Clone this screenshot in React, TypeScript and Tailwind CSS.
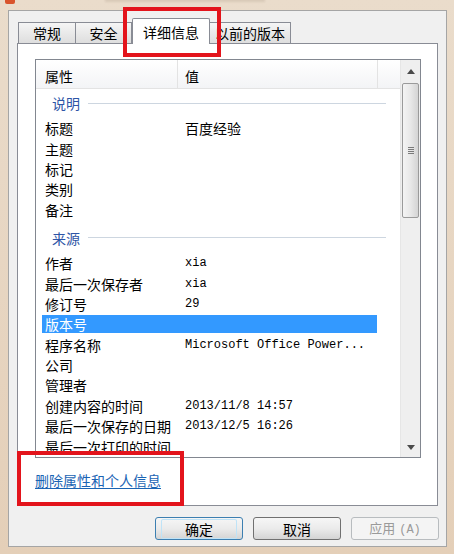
import React from "react";

const cjk = { fontFamily: '"Noto Sans CJK SC", "Noto Sans", sans-serif' };
const mono = {
  fontFamily: '"Liberation Mono", "Noto Sans CJK SC", monospace',
};

// 说明 group
const descRows: [string, string][] = [
  ["标题", "百度经验"],
  ["主题", ""],
  ["标记", ""],
  ["类别", ""],
  ["备注", ""],
];

// 来源 group
const originRows: [string, string][] = [
  ["作者", "xia"],
  ["最后一次保存者", "xia"],
  ["修订号", "29"],
  ["版本号", ""],
  ["程序名称", "Microsoft Office Power..."],
  ["公司", ""],
  ["管理者", ""],
  ["创建内容的时间", "2013/11/8 14:57"],
  ["最后一次保存的日期", "2013/12/5 16:26"],
  ["最后一次打印的时间", ""],
];

function GroupHeader({ label, first }: { label: string; first?: boolean }) {
  return (
    <div
      className={`flex items-center h-[20px] box-content pb-[5px] pl-[16px] pr-[14px] ${
        first ? "pt-[4px]" : "pt-[8px]"
      }`}
    >
      <span className="text-[14px] leading-[20px] text-[#2d55a6]">{label}</span>
      <div className="flex-1 ml-[8px] h-px bg-[#cdd6e0]" />
    </div>
  );
}

function PropRow({
  name,
  value,
  selected,
}: {
  name: string;
  value: string;
  selected?: boolean;
}) {
  return (
    <div className="flex items-center h-[20.4px] pl-[6px]">
      <div
        className={`flex items-center w-[335px] h-[18px] ${
          selected ? "bg-[#3399ff] text-white" : "text-black"
        }`}
      >
        <span className="w-[135px] pl-[3px] text-[14px] leading-[18px] whitespace-nowrap overflow-visible">
          {name}
        </span>
        <span
          className="pl-[8px] text-[12px] leading-[18px] whitespace-nowrap"
          style={value && /[\u4e00-\u9fff]/.test(value) ? { ...cjk, fontSize: 14 } : mono}
        >
          {value}
        </span>
      </div>
    </div>
  );
}

function Arrow({ up }: { up?: boolean }) {
  return (
    <svg width="8" height="5" viewBox="0 0 8 5">
      <path d={up ? "M0 5 L4 0 L8 5 Z" : "M0 0 L8 0 L4 5 Z"} fill="#4a4a4a" />
    </svg>
  );
}

function Scrollbar() {
  return (
    <div className="w-[20px] flex flex-col bg-[#efefef] border-l border-[#e6e6e6]">
      <div className="h-[23px] flex items-center justify-center">
        <Arrow up />
      </div>
      <div className="h-[135px] mx-[1px] rounded-[2px] border border-[#9a9a9a] bg-gradient-to-r from-[#f4f4f4] via-[#e8e8e8] to-[#d4d4d4] flex items-center justify-center">
        <div className="flex flex-col gap-[1px]">
          <div className="w-[6px] h-px bg-[#7a7a7a]" />
          <div className="w-[6px] h-px bg-[#7a7a7a]" />
          <div className="w-[6px] h-px bg-[#7a7a7a]" />
          <div className="w-[6px] h-px bg-[#7a7a7a]" />
        </div>
      </div>
      <div className="flex-1" />
      <div className="h-[20px] flex items-center justify-center">
        <Arrow />
      </div>
    </div>
  );
}

function Tab({
  label,
  width,
  active,
}: {
  label: string;
  width: string;
  active?: boolean;
}) {
  if (active) {
    return (
      <div
        className={`${width} relative z-10 h-[26px] -mb-px bg-white border border-b-0 border-[#898c95] rounded-t-[2px] flex items-start justify-center pt-[3px] text-[14px] leading-[20px] text-black`}
      >
        {label}
      </div>
    );
  }
  return (
    <div
      className={`${width} h-[21px] bg-gradient-to-b from-[#f5f5f5] to-[#dedede] border border-b-0 border-[#898c95] -ml-px flex items-center justify-center text-[14px] leading-[20px] text-black`}
    >
      {label}
    </div>
  );
}

function Button({
  label,
  isDefault,
  disabled,
}: {
  label: React.ReactNode;
  isDefault?: boolean;
  disabled?: boolean;
}) {
  if (disabled) {
    return (
      <button className="w-[88px] h-[23px] rounded-[3px] border border-[#b8bcbf] bg-[#f4f4f4] text-[13px] text-[#9a9a9a] flex items-center justify-center">
        {label}
      </button>
    );
  }
  return (
    <button
      className={`w-[88px] h-[23px] rounded-[3px] border ${
        isDefault ? "border-[#3c7fb1]" : "border-[#707070]"
      } bg-gradient-to-b from-[#f6f6f6] via-[#ebebeb] to-[#d4d4d4] text-[14px] leading-[20px] text-black flex items-center justify-center`}
    >
      <span
        className={`px-[24px] rounded-[2px] ${
          isDefault ? "shadow-[inset_0_0_0_1px_#bfe3f7]" : ""
        }`}
      >
        {label}
      </span>
    </button>
  );
}

export default function App() {
  return (
    <div
      className="relative w-[454px] h-[554px] overflow-hidden bg-gradient-to-b from-[#eadccb] to-[#e4cfb8] flex flex-col"
      style={cjk}
    >
      {/* title bar remains */}
      <div className="h-[10px] flex items-start pl-[5px]">
        <div className="w-[10px] h-[4px] bg-[#d9542d] rounded-b-[2px]" />
        <div className="ml-[90px] mt-[-2px] h-[4px] w-[160px] bg-[#bfae9c] opacity-40 blur-[1px]" />
      </div>

      <div className="flex pl-[8px]">
        {/* dialog */}
        <div className="w-[439px] h-[537px] border border-[#a5a5a5] bg-[#f0f0f0] flex flex-col pt-[7px]">
          {/* tabs */}
          <div className="h-[25px] flex items-end pl-[10px]">
            <Tab label="常规" width="w-[58px]" />
            <Tab label="安全" width="w-[57px]" />
            <Tab label="详细信息" width="w-[78px]" active />
            <Tab label="以前的版本" width="w-[82px]" />
          </div>

          {/* tab panel */}
          <div className="flex gap-0 px-[8px]">
            <div className="w-[421px] h-[463px] bg-white border border-[#898c95] flex flex-col pt-[15px] pl-[17px] pr-[16px]">
              {/* property list */}
              <div className="h-[399px] border border-[#828790] flex">
                <div className="flex-1 flex flex-col overflow-hidden">
                  <div className="h-[29px] flex border-b border-[#e3e3e3] bg-gradient-to-b from-white to-[#f3f4f6] text-[14px] leading-[20px] text-black">
                    <div className="w-[142px] pl-[9px] pt-[6px] border-r border-[#e3e3e3]">
                      属性
                    </div>
                    <div className="w-[200px] pl-[7px] pt-[6px] border-r border-[#e3e3e3]">
                      值
                    </div>
                    <div className="flex-1" />
                  </div>
                  <div className="flex-1 overflow-hidden">
                    <GroupHeader label="说明" first />
                    {descRows.map(([n, v]) => (
                      <PropRow key={n} name={n} value={v} />
                    ))}
                    <GroupHeader label="来源" />
                    {originRows.map(([n, v]) => (
                      <PropRow key={n} name={n} value={v} selected={n === "版本号"} />
                    ))}
                  </div>
                </div>
                <Scrollbar />
              </div>

              <a
                href="#"
                className="mt-[12px] self-start text-[14px] leading-[20px] text-[#1a64b4] underline underline-offset-2"
              >
                删除属性和个人信息
              </a>
            </div>
          </div>

          {/* buttons */}
          <div className="flex justify-end gap-[10px] pr-[7px] pt-[11px]">
            <Button label="确定" isDefault />
            <Button label="取消" />
            <Button
              disabled
              label={
                <span>
                  应用<span style={mono} className="text-[12px] ml-[4px]">(A)</span>
                </span>
              }
            />
          </div>
        </div>
      </div>

      {/* red annotation boxes */}
      <div className="absolute left-[123px] top-[7px] w-[98px] h-[50px] border-[4px] border-[#e3141c] pointer-events-none z-20" />
      <div className="absolute left-[17px] top-[451px] w-[167px] h-[55px] border-[4px] border-[#e3141c] pointer-events-none z-20" />
    </div>
  );
}
